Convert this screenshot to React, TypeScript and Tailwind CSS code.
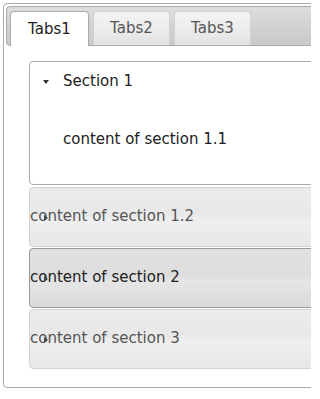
import React from 'react';

const font = { fontFamily: '"DejaVu Sans", Verdana, sans-serif' };

function Tab({ label, active }: { label: string; active?: boolean }) {
  return (
    <li
      className={
        active
          ? 'w-[79px] h-[35px] -mb-px flex items-center justify-center rounded-t-[4px] border border-b-0 border-[#aaaaaa] bg-white text-[15px] text-[#212121]'
          : 'w-[77px] h-[34px] flex items-center justify-center rounded-t-[4px] border border-b-0 border-[#d3d3d3] bg-[linear-gradient(#f3f3f3,#ececec_50%,#e2e2e2)] text-[15px] text-[#555555]'
      }
    >
      {label}
    </li>
  );
}

function Header({ label, hover }: { label: string; hover?: boolean }) {
  return (
    <div
      className={
        hover
          ? 'relative h-[60px] flex items-center rounded-[4px] border border-[#999999] bg-[linear-gradient(#e2e2e2,#dddddd_45%,#e6e6e6_55%,#dadada)] text-[15px] text-[#212121]'
          : 'relative h-[60px] flex items-center rounded-[4px] border border-[#d3d3d3] bg-[linear-gradient(#ebebeb,#e8e8e8_45%,#efefef_55%,#e6e6e6)] text-[15px] text-[#555555]'
      }
    >
      <span className="pb-[2px]">{label}</span>
      <span className="absolute left-[14px] top-[27px] w-0 h-0 border-y-[3px] border-y-transparent border-l-[4px] border-l-[#444]" />
    </div>
  );
}

export default function App() {
  return (
    <div className="w-[311px] h-[399px] overflow-hidden bg-white" style={font}>
      <div className="ml-[3px] mt-[3px] w-[330px] h-[385px] rounded-[4px] border border-[#aaaaaa] p-[2px]">
        <ul className="h-[40px] flex items-end gap-[4px] pl-[3px] rounded-[4px] border border-[#aaaaaa] bg-[linear-gradient(#dedede,#d2d2d2_50%,#c9c9c9)]">
          <Tab label="Tabs1" active />
          <Tab label="Tabs2" />
          <Tab label="Tabs3" />
        </ul>
        <div className="pl-[23px] pt-[15px] flex flex-col gap-px w-[320px]">
          <div className="mb-px h-[124px] rounded-[4px] border border-[#aaaaaa] bg-white text-[15px] text-[#212121] flex flex-col">
            <div className="h-[36px] flex items-center gap-[14px] pl-[13px] pt-[3px]">
              <span className="w-0 h-0 border-x-[3.5px] border-x-transparent border-t-[4px] border-t-[#333]" />
              <span>Section 1</span>
            </div>
            <div className="pl-[33px] pt-[30px]">content of section 1.1</div>
          </div>
          <Header label="content of section 1.2" />
          <Header label="content of section 2" hover />
          <Header label="content of section 3" />
        </div>
      </div>
    </div>
  );
}
